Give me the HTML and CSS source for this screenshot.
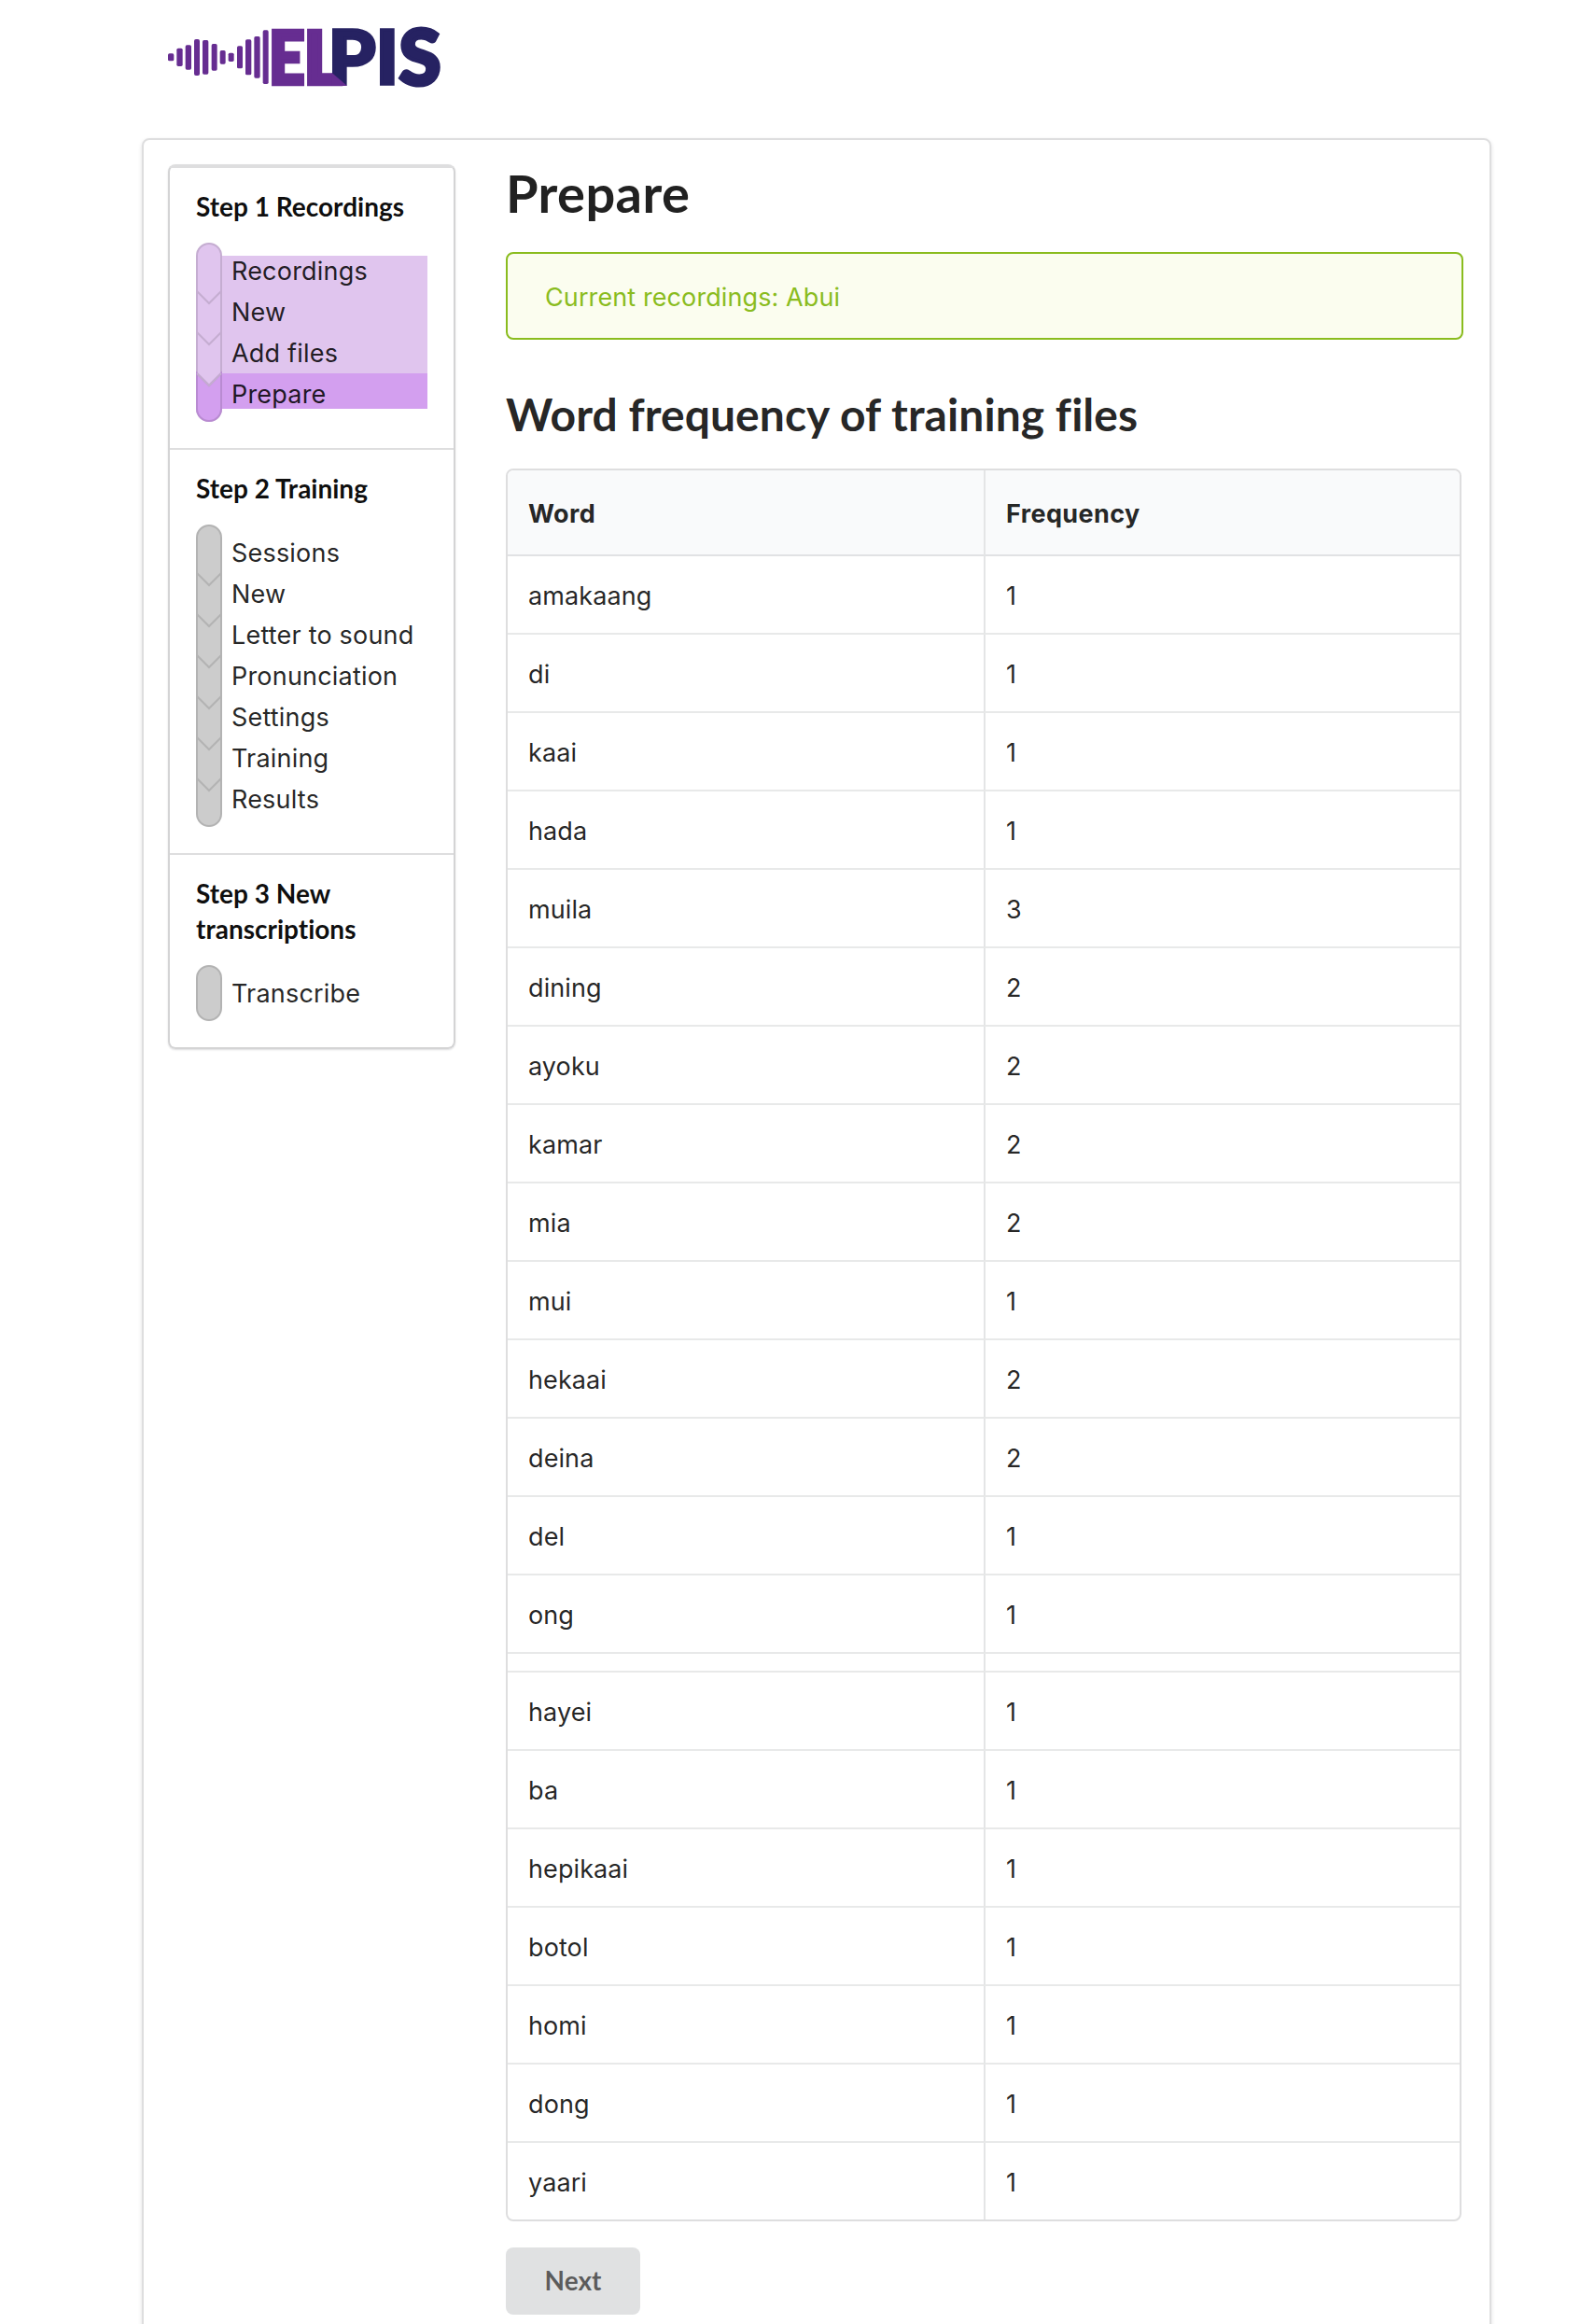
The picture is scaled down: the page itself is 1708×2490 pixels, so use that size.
FILE: index.html
```
<!DOCTYPE html>
<html lang="en">
<head>
<meta charset="utf-8">
<title>Elpis</title>
<link rel="stylesheet" href="styles.css">
</head>
<body>
<header class="top">
  <svg class="logo" viewBox="120 78 882 207" role="img" aria-label="Elpis">
    <g class="wave">
      <rect x="120" y="172" width="19" height="24" rx="5"/>
      <rect x="148" y="155" width="19" height="58" rx="5"/>
      <rect x="176" y="145" width="19" height="79" rx="5"/>
      <rect x="204" y="126" width="18" height="117" rx="6"/>
      <rect x="231" y="129" width="19" height="110" rx="5"/>
      <rect x="260" y="141" width="18" height="86" rx="5"/>
      <rect x="287" y="162" width="18" height="44" rx="5"/>
      <rect x="314" y="170" width="18" height="28" rx="5"/>
      <rect x="342" y="148" width="18" height="72" rx="5"/>
      <rect x="369" y="127" width="19" height="114" rx="5"/>
      <rect x="397" y="117" width="19" height="134" rx="5"/>
      <rect x="425" y="97" width="18" height="173" rx="5"/>
    </g>
    <g class="letters letters-purple">
      <text class="letter-e" transform="translate(443.7 269) scale(.859 1)">E</text>
      <text class="letter-l" transform="translate(555.6 269.5)">L</text>
    </g>
    <g class="letters letters-navy">
      <text transform="translate(634.4 271) scale(1.02 1)">P</text>
      <text transform="translate(787.5 271) scale(1.02 1)">I</text>
      <text class="letter-s" transform="translate(862.7 274) scale(1.02 1.035)">S</text>
    </g>
    <polygon class="fold" points="647,234 696,276 647,276"/>
  </svg>
</header>

<main class="panel">
  <nav class="steps">
    <section class="step">
      <h4 class="step-title">Step 1 Recordings</h4>
      <div class="step-body">
        <svg class="rail rail-done" width="28" height="192" viewBox="0 0 28 192">
          <rect class="rail-fill" x="1" y="1" width="26" height="190" rx="13"/>
          <path class="rail-current" d="M1 140L14 153L27 140V178A13 13 0 0 1 1 178Z"/>
          <path class="rail-line" d="M1 52l13 13l13-13M1 96l13 13l13-13M1 140l13 13l13-13"/>
        </svg>
        <ul class="links links-done">
          <li>Recordings</li><li>New</li><li>Add files</li><li class="current">Prepare</li>
        </ul>
      </div>
    </section>
    <section class="step">
      <h4 class="step-title">Step 2 Training</h4>
      <div class="step-body">
        <svg class="rail" width="28" height="324" viewBox="0 0 28 324">
          <rect class="rail-fill" x="1" y="1" width="26" height="322" rx="13"/>
          <path class="rail-line" d="M1 52l13 13l13-13M1 96l13 13l13-13M1 140l13 13l13-13M1 184l13 13l13-13M1 228l13 13l13-13M1 272l13 13l13-13"/>
        </svg>
        <ul class="links">
          <li>Sessions</li><li>New</li><li>Letter to sound</li><li>Pronunciation</li><li>Settings</li><li>Training</li><li>Results</li>
        </ul>
      </div>
    </section>
    <section class="step">
      <h4 class="step-title">Step 3 New transcriptions</h4>
      <div class="step-body">
        <svg class="rail" width="28" height="60" viewBox="0 0 28 60">
          <rect class="rail-fill" x="1" y="1" width="26" height="58" rx="13"/>
        </svg>
        <ul class="links">
          <li>Transcribe</li>
        </ul>
      </div>
    </section>
  </nav>

  <div class="content">
    <h1>Prepare</h1>
    <div class="message">Current recordings: Abui</div>
    <h2>Word frequency of training files</h2>
    <table class="words">
      <thead><tr><th>Word</th><th>Frequency</th></tr></thead>
      <tbody>
        <tr><td>amakaang</td><td>1</td></tr>
        <tr><td>di</td><td>1</td></tr>
        <tr><td>kaai</td><td>1</td></tr>
        <tr><td>hada</td><td>1</td></tr>
        <tr><td>muila</td><td>3</td></tr>
        <tr><td>dining</td><td>2</td></tr>
        <tr><td>ayoku</td><td>2</td></tr>
        <tr><td>kamar</td><td>2</td></tr>
        <tr><td>mia</td><td>2</td></tr>
        <tr><td>mui</td><td>1</td></tr>
        <tr><td>hekaai</td><td>2</td></tr>
        <tr><td>deina</td><td>2</td></tr>
        <tr><td>del</td><td>1</td></tr>
        <tr><td>ong</td><td>1</td></tr>
        <tr class="gap"><td></td><td></td></tr>
        <tr><td>hayei</td><td>1</td></tr>
        <tr><td>ba</td><td>1</td></tr>
        <tr><td>hepikaai</td><td>1</td></tr>
        <tr><td>botol</td><td>1</td></tr>
        <tr><td>homi</td><td>1</td></tr>
        <tr><td>dong</td><td>1</td></tr>
        <tr><td>yaari</td><td>1</td></tr>
      </tbody>
    </table>
    <button class="next" type="button">Next</button>
  </div>
</main>
</body>
</html>
```
FILE: styles.css
```
* { box-sizing: border-box; }
html { overflow: hidden; }
body {
  margin: 0;
  height: 2490px;
  overflow: hidden;
  background: #fff;
  color: rgba(0, 0, 0, .87);
  font: 27px/32px Inter, "Liberation Sans", sans-serif;
  letter-spacing: .1px;
}
h1, h2, h4 { margin: 0; font-family: Lato, sans-serif; font-weight: 700; letter-spacing: 0; }

.top { height: 148px; padding: 26px 0 0 180px; }
.logo { display: block; width: 294px; height: 69px; overflow: visible; }
.wave { fill: #662d91; }
.letters { font: 900 240px Lato, sans-serif; letter-spacing: 0; stroke-width: 10; }
.letters-purple { fill: #662d91; stroke: #662d91; }
.letters-navy { fill: #262262; stroke: #262262; }
.letter-e { font-size: 234px; stroke-width: 14; }
.letter-l { font-size: 236px; stroke-width: 13; }
.letter-s { stroke-width: 12; }
.fold { fill: #662d91; }

.panel {
  display: flex;
  align-items: flex-start;
  gap: 54px;
  width: 1446px;
  height: 2400px;
  margin-left: 152px;
  padding: 26px;
  border: 2px solid #dededf;
  border-radius: 8px;
  box-shadow: 0 2px 4px rgba(34, 36, 38, .15);
}

.steps {
  flex: none;
  width: 308px;
  border: 2px solid #d4d4d5;
  border-top-color: #dededf;
  border-radius: 8px;
  box-shadow: 0 1px 2px rgba(34, 36, 38, .15);
}
.step { padding: 0 28px 28px; border-top: 2px solid #dededf; }
.step-title {
  padding: 22px 0 20px;
  color: rgba(0, 0, 0, .95);
  font-size: 28px;
  line-height: 38px;
  font-variant-ligatures: none;
}
.step-body { display: flex; }
.rail { flex: none; display: block; }
.rail-fill { fill: #ccc; stroke: #b3b3b3; stroke-width: 2; }
.rail-line { fill: none; stroke: #b3b3b3; stroke-width: 2; }
.rail-done .rail-fill { fill: #e0c5ee; stroke: #c5add1; }
.rail-done .rail-line { stroke: #c5add1; }
.rail-current { fill: #d39fef; stroke: #b98bd2; stroke-width: 2; }
.links { flex: 1; margin: 0; padding: 14px 0; list-style: none; letter-spacing: .2px; }
.links li { padding: 7px 0 5px 10px; white-space: nowrap; }
.links li:first-child { padding-top: 1px; }
.links li:last-child { height: 38px; padding-bottom: 0; }
.links li:only-child { height: 32px; }
.links-done li { background: #e0c5ee; }
.links-done .current { background: #d39fef; }

.content { width: 1026px; padding-top: 1px; }
h1 { font-size: 56px; line-height: 60px; letter-spacing: .4px; }
.message {
  height: 94px;
  margin-top: 33px;
  padding: 31px 40px 0;
  border: 2px solid #8abc1e;
  border-radius: 8px;
  background: #fbfdef;
  color: #8abc1e;
}
h2 { margin-top: 49px; font-size: 48px; line-height: 62px; letter-spacing: .05px; }
.words {
  width: 1024px;
  margin-top: 27px;
  border: 2px solid #dededf;
  border-radius: 8px;
  border-spacing: 0;
  table-layout: fixed;
  overflow: hidden;
}
.words th, .words td { padding: 3px 22px 0; text-align: left; }
.words th { border-bottom: 2px solid #e1e2e4; background: #f9fafb; font-weight: 700; letter-spacing: .4px; }
.words td { height: 84px; border-bottom: 2px solid #e8e9e9; }
.words th + th, .words td + td { border-left: 2px solid #e4e5e6; }
.words .gap td { height: 20px; }
.words tr:last-child td { height: 82px; border-bottom: 0; }
.words thead tr:last-child th { height: 92px; }
.next {
  display: block;
  width: 144px;
  height: 72px;
  margin-top: 28px;
  padding: 0 0 2px;
  border: 0;
  border-radius: 8px;
  background: #e0e1e2;
  color: rgba(0, 0, 0, .6);
  font: 700 28px/28px Lato, sans-serif;
}
```
